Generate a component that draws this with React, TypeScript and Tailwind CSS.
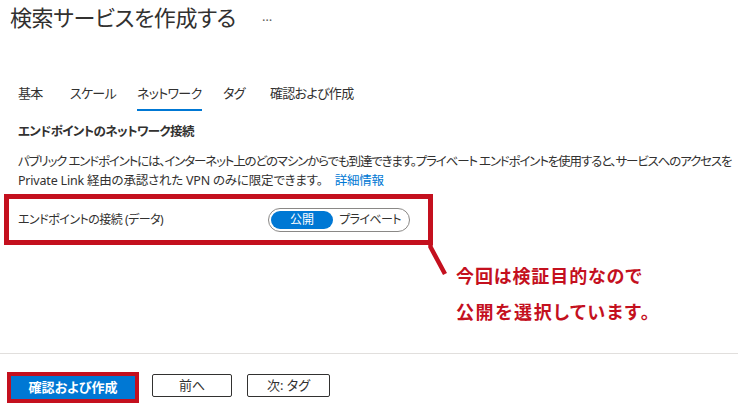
import React from 'react';

const tabs = [
  { label: '基本', width: 'w-[52px]' },
  { label: 'スケール', width: 'w-[67px]' },
  { label: 'ネットワーク', width: 'w-[86px]' },
  { label: 'タグ', width: 'w-[47px]' },
  { label: '確認および作成', width: 'w-[100px]' },
];

const App: React.FC = () => {
  const active = 'ネットワーク';

  return (
    <div className="relative w-[738px] h-[406px] overflow-hidden bg-white text-[#323130] font-['Noto_Sans','Noto_Sans_CJK_JP',sans-serif] [font-feature-settings:'palt']">
      <div className="flex items-center h-[34px] pl-[10px]">
        <h1 className="text-[22px] leading-none tracking-[-0.4px]">検索サービスを作成する</h1>
        <span className="ml-[26px] text-[13px] text-[#605e5c]">…</span>
      </div>

      <div className="flex mt-[45px] pl-[18px]">
        {tabs.map((tab) => (
          <div key={tab.label} className={tab.width}>
            <div className="inline-flex flex-col">
              <div className="h-[30px] flex items-center text-[13px] tracking-[-0.7px]">{tab.label}</div>
              <div className={tab.label === active ? 'h-[2px] bg-[#0078d4]' : 'h-[2px]'} />
            </div>
          </div>
        ))}
      </div>

      <div className="mt-[11px] pl-[18px] h-[20px] flex items-center text-[12.5px] font-semibold tracking-[-0.6px]">
        エンドポイントのネットワーク接続
      </div>

      <div className="mt-[10px] pl-[18px] text-[12.5px] leading-[19px] whitespace-nowrap">
        <div className="tracking-[-1.15px]">
          パブリック エンドポイントには、インターネット上のどのマシンからでも到達できます。プライベート エンドポイントを使用すると、サービスへのアクセスを
        </div>
        <div className="tracking-[-0.2px]">
          Private Link 経由の承認された VPN のみに限定できます。
          <a className="ml-[12px] text-[#0078d4]">詳細情報</a>
        </div>
      </div>

      <div className="mt-[4px] ml-[4px] w-[429px] h-[51px] border-[5px] border-[#c4101e] flex items-center pl-[9px]">
        <span className="w-[250px] text-[12px] tracking-[-0.5px]">エンドポイントの接続 (データ)</span>
        <div className="w-[142px] h-[24px] rounded-full border border-[#8a8886] flex items-center p-[2px] text-[12px]">
          <div className="w-[62px] h-[18px] rounded-full bg-[#0078d4] text-white flex items-center justify-center">
            公開
          </div>
          <div className="flex-1 flex items-center justify-center tracking-[-0.6px]">プライベート</div>
        </div>
      </div>

      <svg className="absolute left-0 top-0" width="738" height="406" viewBox="0 0 738 406">
        <polyline points="430.5,240 430.5,247 445,274" fill="none" stroke="#c4101e" strokeWidth="4.5" />
      </svg>

      <div className="mt-[13px] ml-[456px] text-[18px] leading-[36px] font-bold text-[#c4101e]">
        <div className="tracking-[0.9px]">今回は検証目的なので</div>
        <div className="tracking-[1.6px]">公開を選択しています。</div>
      </div>

      <div className="mt-[23px] h-px bg-[#e1dfdd]" />

      <div className="flex items-start mt-[18px]">
        <div className="ml-[7px] w-[132px] h-[31px] border-[4px] border-[#c4101e]">
          <button className="w-full h-full bg-[#0078d4] text-white text-[13px] font-semibold flex items-center justify-center">
            確認および作成
          </button>
        </div>
        <button className="ml-[13px] mt-[2px] w-[80px] h-[23px] rounded-[2px] border border-[#323130] text-[13px] flex items-center justify-center">
          前へ
        </button>
        <button className="ml-[15px] mt-[2px] w-[83px] h-[23px] rounded-[2px] border border-[#323130] text-[13px] flex items-center justify-center">
          次: タグ
        </button>
      </div>
    </div>
  );
};

export default App;
